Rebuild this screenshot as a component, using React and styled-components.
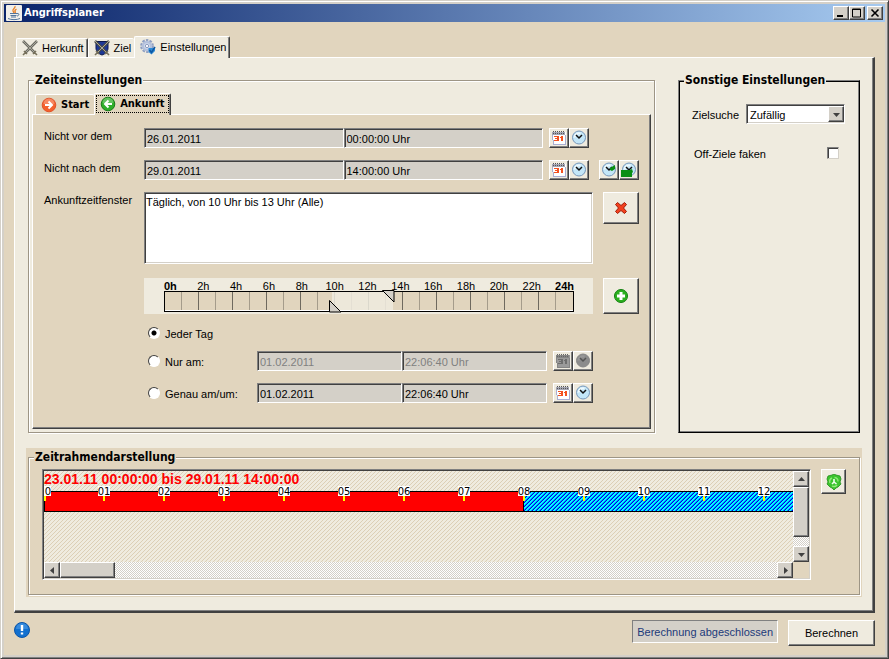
import React, { useState } from "react";
import styled, { createGlobalStyle, css } from "styled-components";

const tan = "#e1d5be";
const cream = "#efebdf";
const face = "#d4d0c8";
const shade = "#808080";
const dark = "#404040";
const boldFont = `"DejaVu Sans Condensed", "Noto Sans", sans-serif`;

const GlobalStyle = createGlobalStyle`
  *, *::before, *::after { box-sizing: border-box; }
  body {
    margin: 0;
    background: ${tan};
    color: #000;
    font: 11px/14px "Liberation Sans", Arial, sans-serif;
  }
  button, input, select, textarea { font: inherit; color: inherit; margin: 0; border-radius: 0; }
  svg { display: block; flex: none; }
`;

const raised = css`
  border: 1px solid;
  border-color: #fff ${dark} ${dark} #fff;
  box-shadow: inset -1px -1px ${shade};
`;

const sunken = css`
  border: 1px solid;
  border-color: ${shade} #fff #fff ${shade};
  box-shadow: inset 1px 1px ${dark}, inset -1px -1px ${face};
`;

const Window = styled.div`
  display: flex;
  flex-direction: column;
  min-height: 100vh;
  padding: 3px 2px 2px 3px;
  background: ${tan};
  border: 1px solid;
  border-color: ${face} ${dark} ${dark} ${face};
  box-shadow: inset 1px 1px #fff, inset -1px -1px ${shade}, inset -3px -3px ${face}, inset 3px 3px ${face};
`;

const TitleBar = styled.header`
  display: flex;
  align-items: center;
  gap: 2px;
  height: 18px;
  padding: 0 2px;
  margin-right: 1px;
  background: linear-gradient(90deg, #0a246a, #a6caf0);
`;

const WindowTitle = styled.h1`
  flex: 1;
  margin: 0;
  color: #fff;
  font: bold 11px/16px ${boldFont};
`;

const WindowButton = styled.button`
  display: grid;
  place-items: center;
  width: 16px;
  height: 14px;
  padding: 0;
  margin-left: ${(p) => (p.$apart ? 0 : "-2px")};
  background: ${face};
  ${raised}
`;

const Content = styled.main`
  flex: 1;
  display: flex;
  flex-direction: column;
  padding: 14px 11px 0 10px;
`;

const TabList = styled.div`
  display: flex;
  align-items: flex-end;
  position: relative;
  z-index: 1;
  padding-left: ${(p) => p.$indent}px;
  margin-bottom: -1px;
`;

const Tab = styled.button`
  display: flex;
  align-items: center;
  gap: 4px;
  height: ${(p) => (p.$active ? 22 : 19)}px;
  margin-bottom: ${(p) => (p.$active ? 0 : 1)}px;
  padding: 0 3px ${(p) => (p.$active ? 2 : 0)}px 5px;
  white-space: nowrap;
  background: ${cream};
  border: 0 solid;
  border-width: 1px ${(p) => (p.$edge ? 1 : 0)}px 0 1px;
  border-color: #fff ${dark} #fff #fff;
  border-radius: 2px 2px 0 0;
  box-shadow: ${(p) => (p.$edge ? `inset -1px 0 ${shade}` : "none")};
`;

const InnerTab = styled(Tab)`
  padding-right: 5px;
  background: ${tan};
  font: bold 11px/16px ${boldFont};
  height: ${(p) => (p.$active ? 22 : 20)}px;
  outline: ${(p) => (p.$active ? "1px dotted #000" : "none")};
  outline-offset: -3px;
`;

const TabPanel = styled.section`
  flex: 1;
  display: flex;
  flex-direction: column;
  gap: 15px;
  padding: 14px 11px;
  background: ${cream};
  border: 1px solid;
  border-width: 1px 2px 2px 1px;
  border-color: #fff ${dark} ${dark} #fff;
  box-shadow: inset -1px -1px ${shade};
`;

const Columns = styled.div`
  flex: 1;
  display: grid;
  grid-template-columns: minmax(0, 1fr) 182px;
  gap: 23px;
  padding: 0 2px;
`;

const Group = styled.fieldset`
  display: flex;
  flex-direction: column;
  min-width: 0;
  margin: 0;
  padding: 5px 3px 3px;
  border: 1px solid #9d9585;
  box-shadow: inset 1px 1px #fff, 1px 1px #fff;
`;

const Legend = styled.legend`
  height: 16px;
  margin-left: 2px;
  padding: 0 1px;
  white-space: nowrap;
  font: bold 12px/16px ${boldFont};
  background: ${(p) => (p.$tan ? tan : cream)};
`;

const DarkGroup = styled(Group)`
  border-color: ${shade} #000 #000 ${shade};
  box-shadow: inset 1px 1px #000, inset -1px -1px ${shade};
`;

const Options = styled.div`
  display: flex;
  flex-direction: column;
  gap: 19px;
  padding: 11px 10px;
`;

const Form = styled.div`
  flex: 1;
  display: flex;
  flex-direction: column;
  gap: 12px;
  padding: 13px 11px 23px;
  background: ${tan};
  border: 1px solid;
  border-color: #fff ${dark} ${dark} #fff;
  box-shadow: inset -1px -1px ${shade};
`;

const Row = styled.div`
  display: flex;
  align-items: flex-start;
`;

const SliderRow = styled(Row)`
  margin-top: 2px;
  padding-left: 100px;
`;

const RowLabel = styled.label`
  flex: none;
  width: 100px;
  padding-top: 1px;
`;

const Fields = styled.div`
  flex: 1;
  display: flex;
  min-width: 0;
  margin-right: 6px;
`;

const Field = styled.input`
  flex: 1;
  min-width: 0;
  height: 20px;
  padding: 2px 2px 0;
  background: ${face};
  ${sunken}
  &:disabled { color: #808080; }
`;

const Pair = styled.div`
  display: flex;
`;

const Extra = styled.div`
  display: flex;
  width: ${(p) => p.$width}px;
  padding-left: 10px;
`;

const IconButton = styled.button`
  flex: none;
  display: grid;
  place-items: center;
  width: ${(p) => p.$w || 20}px;
  height: ${(p) => p.$h || 20}px;
  padding: 0;
  background: ${cream};
  ${raised}
`;

const BigButton = styled(IconButton)`
  margin-left: 10px;
`;

const WindowList = styled.textarea`
  flex: 1;
  min-width: 0;
  height: 72px;
  padding: 2px 1px;
  resize: none;
  background: #fff;
  ${sunken}
`;

const HourBox = styled.div`
  flex: 1;
  height: 36px;
  background: ${cream};
`;

const HourLabels = styled.div`
  display: grid;
  grid-template-columns: repeat(13, 1fr);
  height: 13px;
  margin: 0 12px 0 10px;
  padding-top: 2px;
  text-align: center;
  line-height: 13px;
`;

const HourLabel = styled.span`
  font-weight: ${(p) => (p.$bold ? "bold" : "normal")};
`;

const HourTrack = styled.div`
  position: relative;
  height: 21px;
  margin: 0 19px 0 20px;
  border: 1px solid #000;
  box-shadow: inset -1px -1px #fff;
`;

const Hours = styled.div`
  display: grid;
  grid-template-columns: repeat(24, 1fr);
  height: 18px;
  background: ${tan};
`;

const Hour = styled.span`
  border-right: 1px solid ${(p) => (p.$even ? "#6f6a5f" : "#a59c8b")};
  &:last-child { border: 0; }
`;

const Selected = styled.div`
  position: absolute;
  top: 0;
  height: 18px;
  background: ${cream};
  opacity: 0.85;
`;

const Handle = styled.div`
  position: absolute;
  top: ${(p) => (p.$upper ? "-2px" : "8px")};
  margin-left: ${(p) => (p.$upper ? "-11px" : "-3px")};
`;

const RangeInput = styled.input`
  position: absolute;
  top: ${(p) => (p.$upper ? 0 : "50%")};
  left: 0;
  width: 100%;
  height: 50%;
  opacity: 0;
`;

const ChoiceRow = styled(Row)`
  padding-left: 104px;
  padding-right: 46px;
`;

const Choice = styled.label`
  flex: none;
  display: flex;
  gap: 5px;
  width: 109px;
  height: ${(p) => (p.$short ? 13 : 20)}px;
  padding-top: ${(p) => (p.$short ? 1 : 4)}px;
`;

const Radio = styled.input`
  appearance: none;
  width: 12px;
  height: 12px;
  background: ${(p) => (p.checked ? "radial-gradient(circle, #000 0 2px, #fff 3px)" : "#fff")};
  border: 1px solid;
  border-color: ${dark} #fff #fff ${dark};
  && { border-radius: 50%; }
`;

const OptionRow = styled.div`
  display: flex;
  align-items: center;
  justify-content: space-between;
  min-height: 20px;
`;

const SelectBox = styled.div`
  position: relative;
  width: 99px;
  margin-right: 1px;
`;

const Select = styled.select`
  display: block;
  appearance: none;
  width: 100%;
  height: 20px;
  padding: 2px 18px 0 3px;
  background: #fff;
  ${sunken}
`;

const SelectArrow = styled.span`
  position: absolute;
  top: 2px;
  right: 1px;
  display: grid;
  place-items: center;
  width: 16px;
  height: 16px;
  background: ${face};
  pointer-events: none;
  ${raised}
`;

const Check = styled.input`
  appearance: none;
  width: 12px;
  height: 12px;
  background: #fff;
  border: 1px solid;
  border-color: ${shade} ${face} ${face} ${shade};
  box-shadow: inset 1px 1px ${dark};
  && { margin-right: 7px; }
`;

const OptionLabel = styled.label`
  padding-left: ${(p) => (p.$indent ? 2 : 0)}px;
  padding-top: 2px;
`;

const TimeFrame = styled.div`
  padding: 1px 2px 2px;
  background: ${tan};
`;

const TimeBody = styled.div`
  display: flex;
  align-items: flex-start;
  gap: 10px;
  padding: 0 10px 11px;
`;

const TimeGroup = styled(Group)`
  padding-top: 4px;
`;

const ScrollPane = styled.div`
  flex: 1;
  display: grid;
  grid-template-columns: minmax(0, 1fr) 16px;
  grid-template-rows: 91px 16px;
  min-width: 0;
  padding: 1px;
  ${sunken}
`;

const checker = css`
  background: conic-gradient(#fff 25%, ${face} 0 50%, #fff 0 75%, ${face} 0) 0 0 / 2px 2px;
`;

const VScroll = styled.div`
  display: flex;
  flex-direction: column;
  ${checker}
`;

const HScroll = styled.div`
  display: flex;
  ${checker}
`;

const ScrollButton = styled.button`
  display: grid;
  place-items: center;
  width: 16px;
  height: 16px;
  padding: 0;
  background: ${face};
  ${raised}
`;

const VThumb = styled.div`
  height: 50px;
  margin-bottom: auto;
  background: ${face};
  ${raised}
`;

const HThumb = styled.div`
  width: 55px;
  margin-right: auto;
  background: ${face};
  ${raised}
`;

const Timeline = styled.svg`
  width: 100%;
  height: 91px;
  text { font-family: "Liberation Sans", Arial, sans-serif; }
`;

const TimelineTick = styled.text`
  && { font: 10px "DejaVu Sans", sans-serif; }
`;

const Footer = styled.footer`
  display: flex;
  align-items: flex-start;
  gap: 10px;
  padding: 7px 0 10px;
`;

const InfoIcon = styled.div`
  flex: 1;
  padding-top: 2px;
`;

const Status = styled.output`
  height: 23px;
  padding: 4px;
  color: #1c3a7a;
  background: ${face};
  border: 1px solid;
  border-color: ${shade} #fff #fff ${shade};
`;

const ActionButton = styled.button`
  width: 87px;
  height: 26px;
  background: ${cream};
  ${raised}
`;

const CalendarIcon = ({ off }) => (
  <svg width="16" height="16" viewBox="0 0 16 16" shapeRendering="crispEdges" aria-hidden="true">
    <path d="M1 2h14v13H2V8H1z" fill={off ? "#9a9a9a" : "#fff"} />
    <path d="M1 2h13v3H1z" fill={off ? "#858585" : "#a4a6b4"} />
    <path d="M2 1.500h12M2 3.500h12" stroke={off ? "#666" : "#555"} strokeDasharray="1 1" />
    <path d="M1.500 5v5M2.500 10v4M2 14.500h12M14.500 5v10" fill="none" stroke={off ? "#858585" : "#a9aed2"} />
    <g fill={off ? "#6d6d6d" : "#f4511e"}>
      <path d="M3 6h4v1H3zM4 8h3v1H4zM3 10h4v1H3zM6 6h2v5H6z" />
      <path d="M10 6h2v5h-2zM9 7h1v1H9z" />
    </g>
  </svg>
);

const ClockIcon = ({ off, mark }) => (
  <svg width="16" height="16" viewBox="0 0 16 16" aria-hidden="true">
    <circle cx="8" cy="7.500" r="6.500" fill={off ? "#8c8c8c" : "#c3e6f8"} stroke={off ? "#858585" : "#7797ba"} />
    <path d="M3.500 7.500a4.500 4.500 0 0 1 6-4" stroke={off ? "#999" : "#effaff"} strokeWidth="2" fill="none" />
    <path d="M5 5l3 3 3-3" fill="none" stroke={off ? "#555" : "#111"} strokeWidth="1.500" />
    {mark === "from" && <path d="M9 8V6l5-3v4l-3 2z" fill="#0a8f14" />}
    {mark === "range" && <path d="M0 8h9l2-1 1 3-1 1v4H0z" fill="#0a8f14" />}
  </svg>
);

const SwordsIcon = ({ shield }) => (
  <svg width="16" height="16" viewBox="0 0 16 16" aria-hidden="true">
    {shield && <path d="M2 1.500h12V8c0 4-3 6-6 7-3-1-6-3-6-7z" fill="#1d3796" stroke="#0a174c" />}
    <path d="M1 1l12 12M15 1L3 13" stroke={shield ? "#4b4c47" : "#6b6a62"} strokeWidth="2.600" />
    <path d="M1 1l11 11M15 1L4 12" stroke="#a9a89b" />
    <path d="M2 11l3 3M1 15l2.500-2.500M14 11l-3 3M15 15l-2.500-2.500" stroke="#77715c" strokeWidth="1.600" />
  </svg>
);

const GearIcon = () => (
  <svg width="16" height="16" viewBox="0 0 16 16" aria-hidden="true">
    <circle cx="7" cy="7" r="5.600" fill="none" stroke="#8f9fc2" strokeWidth="2.600" strokeDasharray="2.400 1.120" />
    <circle cx="7" cy="7" r="4" fill="#dbe3f2" stroke="#b4c1dc" strokeWidth="2.400" />
    <circle cx="7" cy="7" r="1.700" fill="#f7f9fd" stroke="#8d9cc0" />
    <path d="M8.500 9H15v3l-3.500 3.500L8.500 13z" fill="#2f8bd6" />
    <path d="M9.500 11l2 2.500L15 8" fill="none" stroke="#0c58a4" strokeWidth="1.600" />
  </svg>
);

const ArrowIcon = ({ left }) => (
  <svg width="16" height="16" viewBox="0 0 16 16" aria-hidden="true">
    <circle cx="8" cy="8" r="6.800" fill={left ? "#2fae2a" : "#f4602c"} stroke={left ? "#197b18" : "#e0532a"} />
    <path d="M2.500 7a5.500 5.500 0 0 1 11 0z" fill="#fff" opacity="0.250" />
    <path d={left ? "M12 8H5M8.500 4.500L5 8l3.500 3.500" : "M4 8h7M7.500 4.500L11 8l-3.500 3.500"} fill="none" stroke="#fff" strokeWidth="2" />
  </svg>
);

const CrossIcon = () => (
  <svg width="16" height="16" viewBox="0 0 16 16" aria-hidden="true">
    <path d="M2.500 4.500l2-2L8 5.500l3.500-3 2 2L10.500 8l3 3.500-2 2L8 10.500l-3.500 3-2-2L5.500 8z" fill="#f2401e" stroke="#a01c08" />
  </svg>
);

const PlusIcon = () => (
  <svg width="16" height="16" viewBox="0 0 16 16" aria-hidden="true">
    <circle cx="8" cy="8" r="6.500" fill="#2bb01f" stroke="#12800f" />
    <path d="M8 4v8M4 8h8" stroke="#fff" strokeWidth="3" />
  </svg>
);

const RefreshIcon = () => (
  <svg width="16" height="16" viewBox="0 0 16 16" aria-hidden="true">
    <path d="M8 0l2 1 4 1 1 3-1 3 1 2-3 3-2 1-2 2-2-2-2-1-3-3 1-2-1-3 1-3 4-1z" fill="#3cc42e" stroke="#238d1c" strokeWidth="0.800" />
    <path d="M4 9a4 4 0 0 1 2-5M8.500 3.500a4 4 0 0 1 3.500 4M11 11a4 4 0 0 1-5 1" fill="none" stroke="#8fe878" strokeWidth="1.400" />
    <path d="M8 5v3l-2 2M8 8l2.500 2" fill="none" stroke="#f2fff0" strokeWidth="1.600" />
  </svg>
);

const JavaIcon = () => (
  <svg width="16" height="16" viewBox="0 0 16 16" aria-hidden="true">
    <rect width="16" height="16" rx="1" fill="#f1efea" />
    <path d="M9 1c1 2-3 3-2 5l1 2M10.500 4c-2 1-2 2-1 4" fill="none" stroke="#e8832a" strokeWidth="1.300" />
    <path d="M4 8.500h7M4.500 10.500h6M5 12h5M11 8.500c3-.5 2 2.500 0 2.500M2 13.500c3 1.500 9 1.500 12 0" fill="none" stroke="#53759c" />
  </svg>
);

const InfoMark = () => (
  <svg width="16" height="16" viewBox="0 0 16 16" role="img" aria-label="Hinweis">
    <circle cx="8" cy="8" r="7.500" fill="#1270cf" stroke="#0b55a8" />
    <path d="M2 7a6 6 0 0 1 12 0z" fill="#5ba6ec" opacity="0.500" />
    <path d="M8 3v6M8 10.500v2" stroke="#fff" strokeWidth="2.400" />
  </svg>
);

const arrows = {
  up: "M0 5h7L3.500 1z",
  down: "M0 2h7L3.500 6z",
  left: "M5 0v7L1 3.500z",
  right: "M2 0v7l4-3.500z",
};

const Arrow = ({ dir }) => (
  <svg width="7" height="7" aria-hidden="true">
    <path d={arrows[dir]} fill={dark} />
  </svg>
);

function DateTime({ id, name, date, time, disabled }) {
  return (
    <>
      <Fields>
        <Field id={id} aria-label={`${name} Datum`} defaultValue={date} disabled={disabled} readOnly />
        <Field aria-label={`${name} Uhrzeit`} defaultValue={time} disabled={disabled} readOnly />
      </Fields>
      <Pair>
        <IconButton type="button" aria-label={`${name}: Kalender`} disabled={disabled}><CalendarIcon off={disabled} /></IconButton>
        <IconButton type="button" aria-label={`${name}: Uhr`} disabled={disabled}><ClockIcon off={disabled} /></IconButton>
      </Pair>
    </>
  );
}

function HourSlider() {
  const [from, setFrom] = useState(9.8);
  const [to, setTo] = useState(13.4);
  const pct = (h) => `${(h / 24) * 100}%`;
  return (
    <HourBox>
      <HourLabels>
        {Array.from({ length: 13 }, (_, i) => (
          <HourLabel key={i} $bold={i === 0 || i === 12}>{i * 2}h</HourLabel>
        ))}
      </HourLabels>
      <HourTrack>
        <Hours>
          {Array.from({ length: 24 }, (_, i) => <Hour key={i} $even={i % 2 === 1} />)}
        </Hours>
        <Selected style={{ left: pct(from), width: pct(to - from) }} />
        <Handle style={{ left: pct(from) }}>
          <svg width="14" height="13"><path d="M.5 .5v11.500h11.500z" fill={face} stroke="#000" /></svg>
        </Handle>
        <Handle $upper style={{ left: pct(to) }}>
          <svg width="14" height="13"><path d="M.5 .5h11.500v11.500z" fill={face} stroke="#000" /></svg>
        </Handle>
        <RangeInput type="range" aria-label="Bis Stunde" $upper min="0" max="24" step="0.1" value={to}
          onChange={(e) => setTo(Math.max(from, +e.target.value))} />
        <RangeInput type="range" aria-label="Von Stunde" min="0" max="24" step="0.1" value={from}
          onChange={(e) => setFrom(Math.min(to, +e.target.value))} />
      </HourTrack>
    </HourBox>
  );
}

function TimeChart() {
  const diagonal = [0, 1, 2, 3];
  return (
    <Timeline shapeRendering="crispEdges" role="img" aria-label="Zeitrahmen">
      <defs>
        <pattern id="ground" width="4" height="4" patternUnits="userSpaceOnUse">
          <rect width="4" height="4" fill={cream} />
          {diagonal.map((y) => <rect key={y} x={(7 - y) % 4} y={y} width="1" height="1" fill="#dccfb6" />)}
        </pattern>
        <pattern id="arrival" width="4" height="4" patternUnits="userSpaceOnUse">
          <rect width="4" height="4" fill="#00ffff" />
          {diagonal.map((y) => <rect key={y} x={3 - y} y={y} width="1" height="1" fill="#0000e0" />)}
          {diagonal.map((y) => <rect key={`b${y}`} x={(6 - y) % 4} y={y} width="1" height="1" fill="#0080ff" />)}
        </pattern>
      </defs>
      <rect width="100%" height="91" fill="url(#ground)" />
      <rect y="20" width="100%" height="21" fill="#000" />
      <rect x="480" y="21" width="100%" height="19" fill="url(#arrival)" />
      <rect x="1" y="21" width="478" height="19" fill="#ff0000" />
      <text x="0" y="13" fill="#ff0000" fontSize="14" fontWeight="bold">23.01.11 00:00:00 bis 29.01.11 14:00:00</text>
      {Array.from({ length: 13 }, (_, i) => (
        <g key={i}>
          <rect x={i ? i * 60 - 6 : 0} y="15" width={i ? 12 : 7} height="10" fill="#fff" />
          <rect x={i ? i * 60 - 1 : 0} y="25" width="2" height="5" fill="#ffff00" />
          <TimelineTick x={i ? i * 60 : 4} y="24" textAnchor="middle">{i ? String(i).padStart(2, "0") : "0"}</TimelineTick>
        </g>
      ))}
    </Timeline>
  );
}

export default function App() {
  const [mode, setMode] = useState("every");
  const radio = (value) => ({ type: "radio", name: "mode", checked: mode === value, onChange: () => setMode(value) });
  return (
    <>
      <GlobalStyle />
      <Window>
        <TitleBar>
          <JavaIcon />
          <WindowTitle>Angriffsplaner</WindowTitle>
          <WindowButton type="button" aria-label="Minimieren">
            <svg width="10" height="10"><path d="M1 7h6v2H1z" /></svg>
          </WindowButton>
          <WindowButton type="button" aria-label="Maximieren">
            <svg width="10" height="10"><path d="M.5 1h8v8h-8zM0 1.500h9" fill="none" stroke="#000" /></svg>
          </WindowButton>
          <WindowButton type="button" aria-label="Schließen" $apart>
            <svg width="10" height="10"><path d="M1.500 1.500l7 7M8.500 1.500l-7 7" stroke="#000" strokeWidth="1.600" /></svg>
          </WindowButton>
        </TitleBar>
        <Content>
          <TabList role="tablist" $indent={2}>
            <Tab type="button" role="tab" $edge><SwordsIcon />Herkunft</Tab>
            <Tab type="button" role="tab"><SwordsIcon shield />Ziel</Tab>
            <Tab type="button" role="tab" aria-selected="true" $active $edge><GearIcon />Einstellungen</Tab>
          </TabList>
          <TabPanel>
            <Columns>
              <Group>
                <Legend>Zeiteinstellungen</Legend>
                <TabList role="tablist" $indent={3}>
                  <InnerTab type="button" role="tab"><ArrowIcon />Start</InnerTab>
                  <InnerTab type="button" role="tab" aria-selected="true" $active $edge><ArrowIcon left />Ankunft</InnerTab>
                </TabList>
                <Form>
                  <Row>
                    <RowLabel htmlFor="not-before">Nicht vor dem</RowLabel>
                    <DateTime id="not-before" name="Nicht vor dem" date="26.01.2011" time="00:00:00 Uhr" />
                    <Extra $width={50} />
                  </Row>
                  <Row>
                    <RowLabel htmlFor="not-after">Nicht nach dem</RowLabel>
                    <DateTime id="not-after" name="Nicht nach dem" date="29.01.2011" time="14:00:00 Uhr" />
                    <Extra $width={50}>
                      <IconButton type="button" aria-label="Zeitpunkt setzen"><ClockIcon mark="from" /></IconButton>
                      <IconButton type="button" aria-label="Zeitraum setzen"><ClockIcon mark="range" /></IconButton>
                    </Extra>
                  </Row>
                  <Row>
                    <RowLabel htmlFor="windows">Ankunftzeitfenster</RowLabel>
                    <WindowList id="windows" defaultValue="Täglich, von 10 Uhr bis 13 Uhr (Alle)" />
                    <BigButton type="button" aria-label="Zeitfenster entfernen" $w={36} $h={32}><CrossIcon /></BigButton>
                  </Row>
                  <SliderRow>
                    <HourSlider />
                    <BigButton type="button" aria-label="Zeitfenster hinzufügen" $w={36} $h={36}><PlusIcon /></BigButton>
                  </SliderRow>
                  <ChoiceRow>
                    <Choice $short><Radio {...radio("every")} />Jeder Tag</Choice>
                  </ChoiceRow>
                  <ChoiceRow>
                    <Choice><Radio {...radio("only")} />Nur am:</Choice>
                    <DateTime name="Nur am" date="01.02.2011" time="22:06:40 Uhr" disabled />
                  </ChoiceRow>
                  <ChoiceRow>
                    <Choice><Radio {...radio("exact")} />Genau am/um:</Choice>
                    <DateTime name="Genau am/um" date="01.02.2011" time="22:06:40 Uhr" />
                  </ChoiceRow>
                </Form>
              </Group>
              <DarkGroup>
                <Legend>Sonstige Einstellungen</Legend>
                <Options>
                  <OptionRow>
                    <OptionLabel htmlFor="search">Zielsuche</OptionLabel>
                    <SelectBox>
                      <Select id="search"><option>Zufällig</option></Select>
                      <SelectArrow><Arrow dir="down" /></SelectArrow>
                    </SelectBox>
                  </OptionRow>
                  <OptionRow>
                    <OptionLabel htmlFor="fake" $indent>Off-Ziele faken</OptionLabel>
                    <Check type="checkbox" id="fake" />
                  </OptionRow>
                </Options>
              </DarkGroup>
            </Columns>
            <TimeFrame>
              <TimeGroup>
                <Legend $tan>Zeitrahmendarstellung</Legend>
                <TimeBody>
                  <ScrollPane>
                    <TimeChart />
                    <VScroll>
                      <ScrollButton type="button" aria-label="Nach oben"><Arrow dir="up" /></ScrollButton>
                      <VThumb />
                      <ScrollButton type="button" aria-label="Nach unten"><Arrow dir="down" /></ScrollButton>
                    </VScroll>
                    <HScroll>
                      <ScrollButton type="button" aria-label="Nach links"><Arrow dir="left" /></ScrollButton>
                      <HThumb />
                      <ScrollButton type="button" aria-label="Nach rechts"><Arrow dir="right" /></ScrollButton>
                    </HScroll>
                  </ScrollPane>
                  <IconButton type="button" aria-label="Aktualisieren" $w={25} $h={25}><RefreshIcon /></IconButton>
                </TimeBody>
              </TimeGroup>
            </TimeFrame>
          </TabPanel>
          <Footer>
            <InfoIcon><InfoMark /></InfoIcon>
            <Status>Berechnung abgeschlossen</Status>
            <ActionButton type="button">Berechnen</ActionButton>
          </Footer>
        </Content>
      </Window>
    </>
  );
}
